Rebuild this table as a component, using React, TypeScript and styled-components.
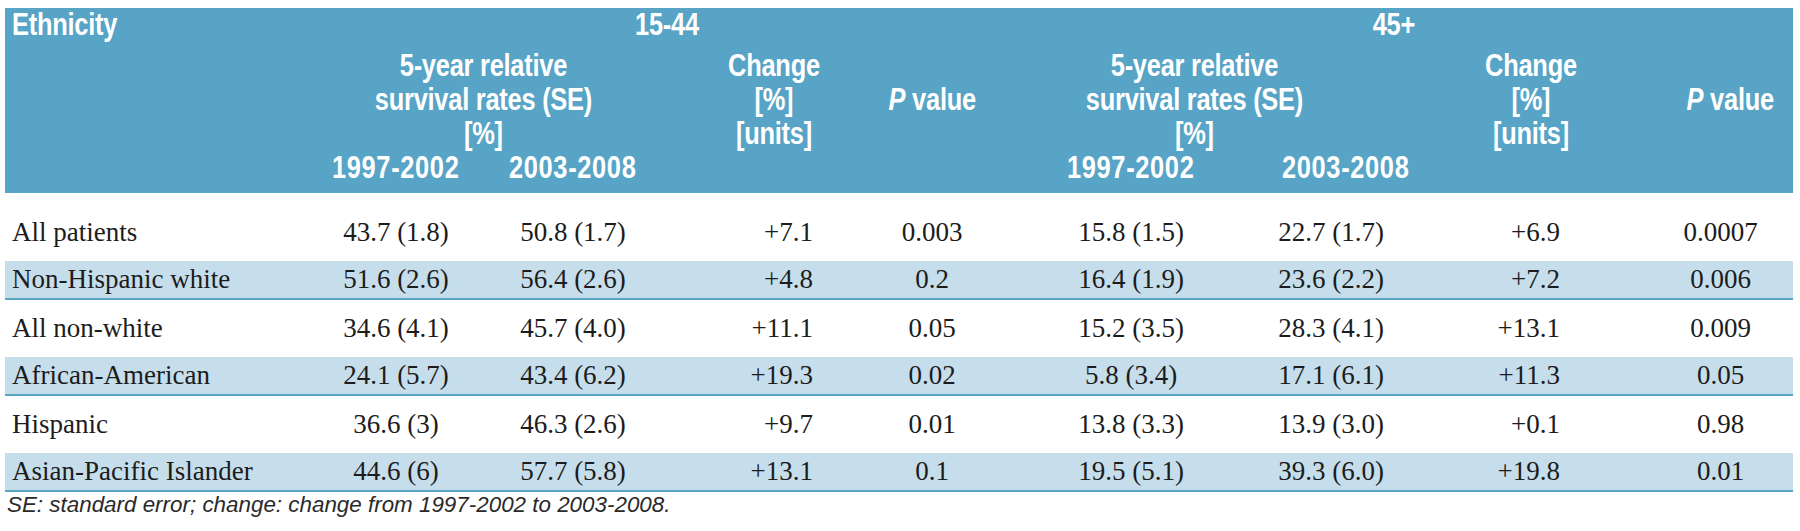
import React from 'react';
import styled, { createGlobalStyle } from 'styled-components';

const GlobalStyle = createGlobalStyle`
  body {
    margin: 0;
    background: #ffffff;
  }
`;

const Page = styled.div`
  padding: 8px 7px 0 5px;
`;

const Table = styled.table`
  width: 1788px;
  border-collapse: collapse;
  table-layout: fixed;
`;

const Head = styled.thead`
  background: #58a4c6;
`;

const HeadRow = styled.tr<{ $height?: number }>`
  height: ${p => (p.$height ? `${p.$height}px` : 'auto')};
`;

const HeadCell = styled.th<{ $align?: 'left' | 'center'; $padLeft?: number; $padTop?: number; $padBottom?: number }>`
  padding: ${p => p.$padTop || 0}px 0 ${p => p.$padBottom || 0}px ${p => p.$padLeft || 0}px;
  text-align: ${p => p.$align || 'center'};
  vertical-align: top;
  color: #ffffff;
  font-family: 'Liberation Sans', Arial, sans-serif;
  font-weight: 700;
  font-size: 31px;
  line-height: 34px;
  letter-spacing: -0.3px;
  white-space: nowrap;
`;

// the printed header face is a condensed gothic, so squeeze the glyphs
const Condensed = styled.span<{ $origin?: 'left' | 'center'; $spacing?: number }>`
  display: inline-block;
  transform: scaleX(0.82);
  transform-origin: ${p => p.$origin || 'center'} center;
  ${p => (p.$spacing !== undefined ? `letter-spacing: ${p.$spacing}px;` : '')}
`;

const Italic = styled.i`
  font-style: italic;
`;

const BodyRow = styled.tr<{ $shaded: boolean }>`
  height: ${p => (p.$shaded ? 38 : 58)}px;
  background: ${p => (p.$shaded ? '#c6deeb' : '#ffffff')};

  td {
    border-bottom: ${p => (p.$shaded ? '2px solid #5aa5c3' : 'none')};
  }

  &:first-child {
    height: 68px;
  }

  &:first-child td {
    padding-top: 10px;
  }
`;

const NameCell = styled.td`
  padding: 0 0 0 7px;
  text-align: left;
  vertical-align: middle;
  font-family: 'Liberation Serif', 'Times New Roman', serif;
  font-size: 27px;
  line-height: 1;
  color: #1c1c1c;
  white-space: nowrap;
`;

const ValueCell = styled.td<{ $align: 'center' | 'right'; $padRight: number }>`
  padding: 0 ${p => p.$padRight}px 0 0;
  text-align: ${p => p.$align};
  vertical-align: middle;
  font-family: 'Liberation Serif', 'Times New Roman', serif;
  font-size: 27px;
  line-height: 1;
  color: #1c1c1c;
  white-space: nowrap;
`;

const Footnote = styled.p`
  margin: 0;
  padding-left: 2px;
  font-family: 'Liberation Sans', Arial, sans-serif;
  font-style: italic;
  font-size: 22.4px;
  line-height: 25px;
  color: #2a2a2a;
`;

type Col = { width: number; align: 'center' | 'right'; pad: number };

const columns: Col[] = [
  { width: 301, align: 'center', pad: 0 },
  { width: 180, align: 'center', pad: 0 },
  { width: 174, align: 'center', pad: 0 },
  { width: 210, align: 'right', pad: 57 },
  { width: 124, align: 'center', pad: 0 },
  { width: 274, align: 'center', pad: 0 },
  { width: 126, align: 'center', pad: 0 },
  { width: 274, align: 'right', pad: 108 },
  { width: 125, align: 'center', pad: 20 },
];

const rows: [string, ...string[]][] = [
  ['All patients', '43.7 (1.8)', '50.8 (1.7)', '+7.1', '0.003', '15.8 (1.5)', '22.7 (1.7)', '+6.9', '0.0007'],
  ['Non-Hispanic white', '51.6 (2.6)', '56.4 (2.6)', '+4.8', '0.2', '16.4 (1.9)', '23.6 (2.2)', '+7.2', '0.006'],
  ['All non-white', '34.6 (4.1)', '45.7 (4.0)', '+11.1', '0.05', '15.2 (3.5)', '28.3 (4.1)', '+13.1', '0.009'],
  ['African-American', '24.1 (5.7)', '43.4 (6.2)', '+19.3', '0.02', '5.8 (3.4)', '17.1 (6.1)', '+11.3', '0.05'],
  ['Hispanic', '36.6 (3)', '46.3 (2.6)', '+9.7', '0.01', '13.8 (3.3)', '13.9 (3.0)', '+0.1', '0.98'],
  ['Asian-Pacific Islander', '44.6 (6)', '57.7 (5.8)', '+13.1', '0.1', '19.5 (5.1)', '39.3 (6.0)', '+19.8', '0.01'],
];

const SurvivalHeader = () => (
  <HeadCell colSpan={2}>
    <Condensed>
      5-year relative
      <br />
      survival rates (SE)
      <br />
      [%]
    </Condensed>
  </HeadCell>
);

const ChangeHeader = ({ padLeft }: { padLeft?: number }) => (
  <HeadCell rowSpan={2} $padLeft={padLeft}>
    <Condensed>
      Change
      <br />
      [%]
      <br />
      [units]
    </Condensed>
  </HeadCell>
);

const PValueHeader = () => (
  <HeadCell rowSpan={2} $padTop={34}>
    <Condensed>
      <Italic>P</Italic> value
    </Condensed>
  </HeadCell>
);

const YearHeader = ({ label }: { label: string }) => (
  <HeadCell $padBottom={8}>
    <Condensed $spacing={0.8}>{label}</Condensed>
  </HeadCell>
);

const App: React.FC = () => {
  return (
    <Page>
      <GlobalStyle />
      <Table>
        <colgroup>
          {columns.map((c, i) => (
            <col key={i} style={{ width: c.width }} />
          ))}
        </colgroup>
        <Head>
          <HeadRow $height={41}>
            <HeadCell rowSpan={3} $align="left" $padLeft={7}>
              <Condensed $origin="left">Ethnicity</Condensed>
            </HeadCell>
            <HeadCell colSpan={4} $padLeft={34}>
              <Condensed>15-44</Condensed>
            </HeadCell>
            <HeadCell colSpan={4}>
              <Condensed>45+</Condensed>
            </HeadCell>
          </HeadRow>
          <HeadRow>
            <SurvivalHeader />
            <ChangeHeader padLeft={18} />
            <PValueHeader />
            <SurvivalHeader />
            <ChangeHeader />
            <PValueHeader />
          </HeadRow>
          <HeadRow>
            <YearHeader label="1997-2002" />
            <YearHeader label="2003-2008" />
            <YearHeader label="1997-2002" />
            <YearHeader label="2003-2008" />
          </HeadRow>
        </Head>
        <tbody>
          {rows.map(([name, ...values], r) => (
            <BodyRow key={name} $shaded={r % 2 === 1}>
              <NameCell>{name}</NameCell>
              {values.map((v, i) => (
                <ValueCell key={i} $align={columns[i + 1].align} $padRight={columns[i + 1].pad}>
                  {v}
                </ValueCell>
              ))}
            </BodyRow>
          ))}
        </tbody>
      </Table>
      <Footnote>SE: standard error; change: change from 1997-2002 to 2003-2008.</Footnote>
    </Page>
  );
};

export default App;
